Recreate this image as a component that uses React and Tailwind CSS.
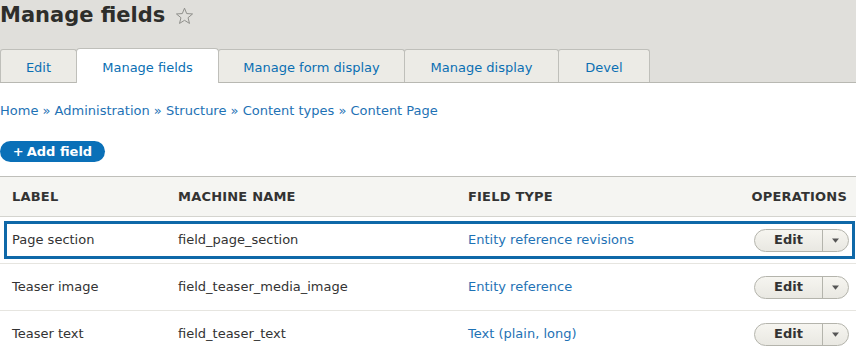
import React from "react";

const tabs = [
  { label: "Edit", w: "w-[77px]" },
  { label: "Manage fields", w: "w-[143px]", active: true },
  { label: "Manage form display", w: "w-[187px]" },
  { label: "Manage display", w: "w-[155px]" },
  { label: "Devel", w: "w-[92px]" },
];

const rows = [
  { label: "Page section", machine: "field_page_section", type: "Entity reference revisions", focus: true },
  { label: "Teaser image", machine: "field_teaser_media_image", type: "Entity reference" },
  { label: "Teaser text", machine: "field_teaser_text", type: "Text (plain, long)" },
];

function EditButton() {
  return (
    <div className="flex h-[23px] w-[95px] items-stretch rounded-full border border-[#b4b4ac] bg-gradient-to-b from-[#f6f5f0] to-[#e9e8e2] text-[13px] font-bold text-[#333]">
      <div className="flex w-[68px] items-center justify-center border-r border-[#b4b4ac]">Edit</div>
      <div className="flex flex-1 items-center justify-center">
        <svg width="9" height="5" viewBox="0 0 9 5">
          <path d="M1 0.5 L8 0.5 L4.5 4.8 Z" fill="#555" />
        </svg>
      </div>
    </div>
  );
}

export default function App() {
  return (
    <div className="h-[350px] w-[856px] overflow-hidden bg-white font-['DejaVu_Sans',sans-serif] text-[13px] text-[#333]">
      <div className="bg-[#e0dfdb] pt-[3px]">
        <h1 className="flex h-[24px] items-center gap-[10px] text-[21px] font-bold leading-[24px] text-[#2e2e2b]">
          <span>Manage fields</span>
          <svg width="19" height="18" viewBox="0 0 24 23" className="mt-[1px]">
            <path
              d="M12 1.5 L14.8 8.4 L22.3 8.9 L16.5 13.7 L18.4 21 L12 17 L5.6 21 L7.5 13.7 L1.7 8.9 L9.2 8.4 Z"
              fill="none"
              stroke="#8a8a85"
              strokeWidth="1.2"
              strokeLinejoin="round"
            />
          </svg>
        </h1>
        <div className="mt-[22px] flex h-[34px] items-end border-b border-[#b8b8b2]">
          {tabs.map((t) => (
            <div
              key={t.label}
              className={
                t.active
                  ? `${t.w} -mb-px -mr-px flex h-[35px] items-center justify-center rounded-t-[4px] border border-b-0 border-[#bfbfba] bg-white pt-[4px] text-[#0a6fb3]`
                  : `${t.w} -mr-px flex h-[33px] items-center justify-center rounded-t-[3px] border border-b-0 border-[#bfbfba] bg-[#ecebe6] pt-[4px] text-[#0a6fb3]`
              }
            >
              {t.label}
            </div>
          ))}
        </div>
      </div>

      <div className="mt-[19px] flex h-[18px] items-center text-[#1e72b5]">
        Home » Administration » Structure » Content types » Content Page
      </div>

      <div className="mt-[21px] flex h-[21px] w-[105px] items-center justify-center gap-[3px] rounded-full bg-[#0a70b8] text-[13px] font-bold text-white">
        <span>+</span>
        <span>Add field</span>
      </div>

      <div className="mt-[14px] border-t border-[#bfbfba]">
        <div className="grid h-[40px] grid-cols-[166px_290px_1fr_auto] items-center border-b border-[#d4d4cf] bg-[#f5f5f2] pr-[9px] text-[13px] font-bold uppercase tracking-[0.2px] text-[#333]">
          <div className="pl-[12px]">Label</div>
          <div className="pl-[12px]">Machine name</div>
          <div className="pl-[12px]">Field type</div>
          <div>Operations</div>
        </div>
        {rows.map((r) => (
          <div
            key={r.label}
            className="relative grid h-[47px] grid-cols-[166px_290px_1fr_auto] items-center border-b border-[#e6e5e0] pr-[7px]"
          >
            {r.focus && (
              <div className="pointer-events-none absolute bottom-[4px] left-[4px] right-[1px] top-[4px] border-[3px] border-[#0f68a8]" />
            )}
            <div className="pl-[12px]">{r.label}</div>
            <div className="pl-[12px]">{r.machine}</div>
            <div className="pl-[12px] text-[#1e72b5]">{r.type}</div>
            <EditButton />
          </div>
        ))}
      </div>
    </div>
  );
}
